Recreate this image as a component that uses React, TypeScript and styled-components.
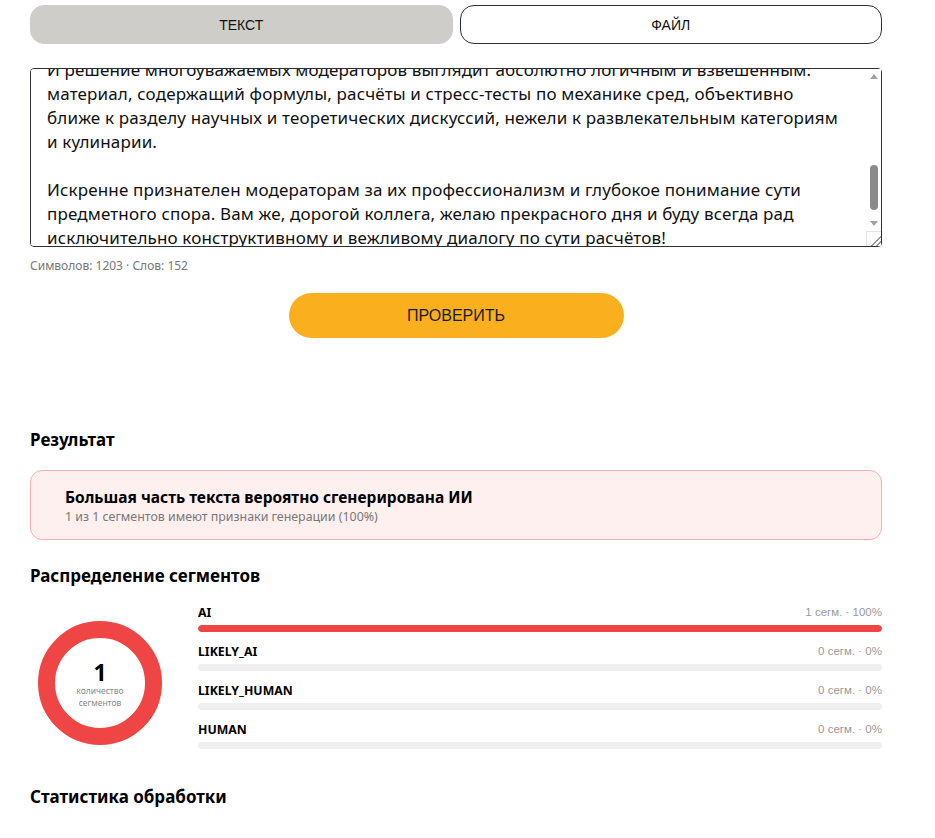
import React, { useEffect, useRef } from "react"
import styled, { createGlobalStyle } from "styled-components"

const GlobalStyle = createGlobalStyle`
  html, body {
    margin: 0;
    padding: 0;
    background: #fff;
  }
  body {
    font-family: "Noto Sans", "Open Sans", Arial, sans-serif;
    color: #111;
  }
`

const Page = styled.div`
  width: 852px;
  padding: 5px 30px 40px;
`

const Tabs = styled.div`
  display: grid;
  grid-template-columns: 1fr 1fr;
  gap: 7px;
`

const Tab = styled.button<{ $active?: boolean }>`
  height: 39px;
  border-radius: 14px;
  border: 1px solid ${(p) => (p.$active ? "#cfcdc9" : "#2e2e3a")};
  background: ${(p) => (p.$active ? "#cfcdc9" : "#fff")};
  font-family: "Liberation Sans", Arial, sans-serif;
  font-size: 14px;
  color: #111;
  text-transform: uppercase;
  cursor: pointer;
  padding: 0;
`

const Editor = styled.div`
  position: relative;
  margin-top: 24px;
`

const TextArea = styled.textarea`
  display: block;
  box-sizing: border-box;
  width: 100%;
  height: 179px;
  padding: 8px 31px 8px 16px;
  border: 1px solid #2e2e3a;
  border-radius: 4px;
  font-family: "Noto Sans", "Open Sans", Arial, sans-serif;
  font-size: 17px;
  letter-spacing: 0.15px;
  line-height: 24px;
  color: #111;
  resize: vertical;
  outline: none;
  white-space: pre-wrap;
  scrollbar-width: none;

  &::-webkit-resizer {
    background-color: #fff;
    background-image: linear-gradient(135deg, transparent 62%, #9a9a9a 62%, #9a9a9a 68%, transparent 68%, transparent 80%, #9a9a9a 80%, #9a9a9a 86%, transparent 86%);
    border-top: 1px solid #e4e4e4;
    border-left: 1px solid #e4e4e4;
  }
`

// classic scrollbar drawn over the right edge of the editor
const Rail = styled.div`
  position: absolute;
  top: 1px;
  right: 1px;
  bottom: 16px;
  width: 15px;
  display: flex;
  flex-direction: column;
  background: #fff;
  pointer-events: none;
`

const RailArrow = styled.div<{ $down?: boolean }>`
  flex: 0 0 15px;
  display: flex;
  align-items: center;
  justify-content: center;

  &::before {
    content: "";
    border-left: 4.5px solid transparent;
    border-right: 4.5px solid transparent;
    ${(p) => (p.$down ? "border-top: 5px solid #a3a3a3;" : "border-bottom: 5px solid #a3a3a3;")}
  }
`

const RailTrack = styled.div`
  flex: 1;
  position: relative;
`

const Thumb = styled.div`
  position: absolute;
  left: 3.5px;
  right: 3.5px;
  top: 81px;
  height: 45px;
  border-radius: 4px;
  background: #8a8a8a;
`

const Counter = styled.div`
  margin-top: 11px;
  font-size: 12px;
  line-height: 16px;
  color: #777;
`

const ButtonRow = styled.div`
  display: flex;
  justify-content: center;
  margin-top: 19px;
`

const CheckButton = styled.button`
  width: 335px;
  height: 45px;
  border: none;
  border-radius: 23px;
  background: #f9af1e;
  font-family: "Liberation Sans", Arial, sans-serif;
  font-size: 16px;
  color: #1a1a1a;
  text-transform: uppercase;
  cursor: pointer;
`

const SectionTitle = styled.h3<{ $top: number }>`
  margin: ${(p) => p.$top}px 0 0;
  font-size: 17px;
  line-height: 24px;
  font-weight: 700;
  color: #000;
`

const Alert = styled.div`
  margin-top: 18px;
  box-sizing: border-box;
  height: 70px;
  padding: 16px 34px;
  border: 1px solid #f7b0b0;
  border-radius: 12px;
  background: #fff0f0;
`

const AlertTitle = styled.div`
  font-size: 15.5px;
  line-height: 20px;
  font-weight: 700;
  color: #000;
`

const AlertText = styled.div`
  margin-top: 1px;
  font-size: 12.4px;
  line-height: 17px;
  color: #777;
`

const Distribution = styled.div`
  display: flex;
  gap: 28px;
  margin-top: 16px;
`

const DonutBox = styled.div`
  position: relative;
  flex: 0 0 140px;
  height: 124px;
  margin-top: 17px;
  display: flex;
  justify-content: center;
`

const DonutCenter = styled.div`
  position: absolute;
  inset: 0;
  display: flex;
  flex-direction: column;
  align-items: center;
  justify-content: center;
  padding-top: 2px;
`

const DonutValue = styled.div`
  font-size: 23px;
  line-height: 26px;
  font-weight: 700;
  color: #000;
`

const DonutLabel = styled.div`
  font-size: 8.5px;
  line-height: 12px;
  color: #888;
  text-align: center;
`

const Bars = styled.div`
  flex: 1;
  display: flex;
  flex-direction: column;
  gap: 11px;
`

const BarRow = styled.div`
  display: flex;
  flex-direction: column;
  gap: 5px;
`

const BarHead = styled.div`
  display: flex;
  justify-content: space-between;
  align-items: center;
  height: 16px;
`

const BarName = styled.span`
  font-size: 12.3px;
  font-weight: 700;
  color: #000;
`

const BarMeta = styled.span`
  font-family: "Liberation Sans", Arial, sans-serif;
  font-size: 11.5px;
  color: #999;
`

const Track = styled.div`
  height: 7px;
  border-radius: 4px;
  background: #efefef;
  overflow: hidden;
`

const Fill = styled.div`
  height: 100%;
  border-radius: 4px;
  background: #ef4545;
`

const text = `Уважаемый коллега, позвольте кратко прокомментировать ваше замечание относительно переноса темы в другой раздел форума. Ваше мнение, безусловно, имеет право на существование, однако хотелось бы обратить внимание на несколько существенных моментов.

Во-первых, обсуждаемая статья содержит подробный вывод уравнений движения, оценку погрешностей и сравнение результатов моделирования с экспериментальными данными. Во-вторых, все расчёты сопровождаются ссылками на профильную литературу и открытыми исходными данными.

Поэтому перенос темы в раздел научных обсуждений представляется вполне обоснованным.
И решение многоуважаемых модераторов выглядит абсолютно логичным и взвешенным:
материал, содержащий формулы, расчёты и стресс-тесты по механике сред, объективно
ближе к разделу научных и теоретических дискуссий, нежели к развлекательным категориям
и кулинарии.

Искренне признателен модераторам за их профессионализм и глубокое понимание сути
предметного спора. Вам же, дорогой коллега, желаю прекрасного дня и буду всегда рад
исключительно конструктивному и вежливому диалогу по сути расчётов!`

type Segment = {
  name: string
  count: number
  percent: number
}

const segments: Segment[] = [
  { name: "AI", count: 1, percent: 100 },
  { name: "LIKELY_AI", count: 0, percent: 0 },
  { name: "LIKELY_HUMAN", count: 0, percent: 0 },
  { name: "HUMAN", count: 0, percent: 0 },
]

const App: React.FC = () => {
  const areaRef = useRef<HTMLTextAreaElement>(null)

  // keep the end of the text in view
  useEffect(() => {
    const el = areaRef.current
    if (el) el.scrollTop = el.scrollHeight - el.clientHeight - 12
  }, [])

  return (
    <Page>
      <GlobalStyle />
      <Tabs>
        <Tab $active>Текст</Tab>
        <Tab>Файл</Tab>
      </Tabs>

      <Editor>
        <TextArea ref={areaRef} defaultValue={text} />
        <Rail>
          <RailArrow />
          <RailTrack>
            <Thumb />
          </RailTrack>
          <RailArrow $down />
        </Rail>
      </Editor>
      <Counter>Символов: 1203 · Слов: 152</Counter>

      <ButtonRow>
        <CheckButton>Проверить</CheckButton>
      </ButtonRow>

      <SectionTitle $top={90}>Результат</SectionTitle>
      <Alert>
        <AlertTitle>Большая часть текста вероятно сгенерирована ИИ</AlertTitle>
        <AlertText>1 из 1 сегментов имеют признаки генерации (100%)</AlertText>
      </Alert>

      <SectionTitle $top={24}>Распределение сегментов</SectionTitle>
      <Distribution>
        <DonutBox>
          <svg width="124" height="124" viewBox="0 0 124 124">
            <circle cx="62" cy="62" r="53.5" fill="none" stroke="#ef4545" strokeWidth="17" />
          </svg>
          <DonutCenter>
            <DonutValue>1</DonutValue>
            <DonutLabel>
              количество
              <br />
              сегментов
            </DonutLabel>
          </DonutCenter>
        </DonutBox>
        <Bars>
          {segments.map((s) => (
            <BarRow key={s.name}>
              <BarHead>
                <BarName>{s.name}</BarName>
                <BarMeta>
                  {s.count} сегм. · {s.percent}%
                </BarMeta>
              </BarHead>
              <Track>
                <Fill style={{ width: `${s.percent}%` }} />
              </Track>
            </BarRow>
          ))}
        </Bars>
      </Distribution>

      <SectionTitle $top={36}>Статистика обработки</SectionTitle>
    </Page>
  )
}

export default App
